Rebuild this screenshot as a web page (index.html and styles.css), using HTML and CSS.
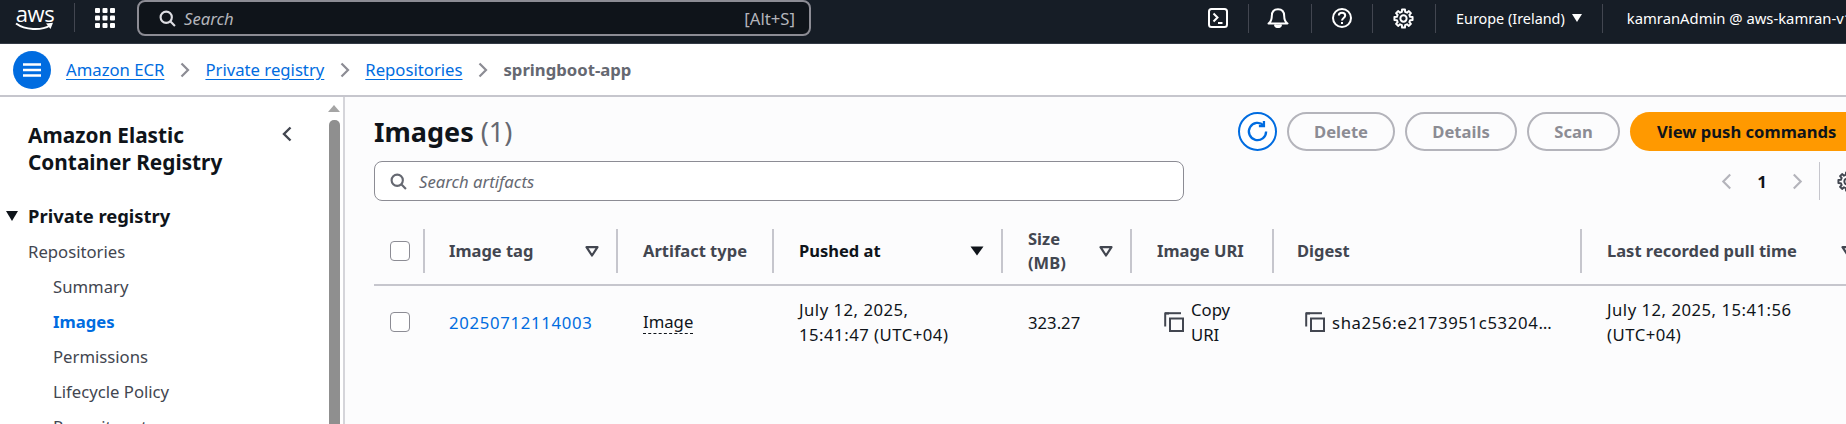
FILE: index.html
```html
<!DOCTYPE html>
<html lang="en">
<head>
<meta charset="utf-8">
<title>Images - Amazon ECR</title>
<link rel="stylesheet" href="styles.css">
</head>
<body>
<svg class="defs" width="0" height="0">
  <symbol id="gear" viewBox="0 0 16 16">
    <path fill="none" stroke="currentColor" stroke-width="1.5" stroke-linejoin="round" d="M14.91 9.1 13.05 9.26 12.46 10.68 13.66 12.11 12.11 13.66 10.68 12.46 9.26 13.05 9.1 14.91 6.9 14.91 6.74 13.05 5.32 12.46 3.89 13.66 2.34 12.11 3.54 10.68 2.95 9.26 1.09 9.1 1.09 6.9 2.95 6.74 3.54 5.32 2.34 3.89 3.89 2.34 5.32 3.54 6.74 2.95 6.9 1.09 9.1 1.09 9.26 2.95 10.68 3.54 12.11 2.34 13.66 3.89 12.46 5.32 13.05 6.74 14.91 6.9Z"/>
    <circle cx="8" cy="8" r="2.4" fill="none" stroke="currentColor" stroke-width="1.5"/>
  </symbol>
  <symbol id="mag" viewBox="0 0 16 16">
    <circle cx="6.8" cy="6.8" r="5.3" fill="none" stroke="currentColor" stroke-width="2"/>
    <path d="M10.6 10.6 15 15" fill="none" stroke="currentColor" stroke-width="2"/>
  </symbol>
  <symbol id="copy" viewBox="0 0 20 20">
    <path d="M5 1.5H1.2V14.5" fill="none" stroke="currentColor" stroke-width="2"/>
    <path d="M1 1.2H17" fill="none" stroke="currentColor" stroke-width="2"/>
    <rect x="6" y="6.5" width="13" height="12.5" fill="none" stroke="currentColor" stroke-width="2"/>
  </symbol>
  <symbol id="sort" viewBox="0 0 14 11">
    <path d="M1.5 1.2H12.5L7 9.5Z" fill="none" stroke="currentColor" stroke-width="2.2" stroke-linejoin="round"/>
  </symbol>
</svg>

<header class="topbar">
  <div class="logo">
    <span class="logo-text">aws</span>
    <svg class="logo-smile" width="40" height="10" viewBox="0 0 40 10"><path d="M1 1.5C10 8 26 9 35 3.5" fill="none" stroke="#fff" stroke-width="2"/><path d="M31 1.5 38 0.8 35.5 7" fill="#fff"/></svg>
  </div>
  <span class="tb-sep"></span>
  <svg class="apps" width="20" height="20" viewBox="0 0 20 20" fill="#fff">
    <rect x="0" y="0" width="5" height="5" rx="1"/><rect x="7.5" y="0" width="5" height="5" rx="1"/><rect x="15" y="0" width="5" height="5" rx="1"/>
    <rect x="0" y="7.5" width="5" height="5" rx="1"/><rect x="7.5" y="7.5" width="5" height="5" rx="1"/><rect x="15" y="7.5" width="5" height="5" rx="1"/>
    <rect x="0" y="15" width="5" height="5" rx="1"/><rect x="7.5" y="15" width="5" height="5" rx="1"/><rect x="15" y="15" width="5" height="5" rx="1"/>
  </svg>
  <div class="tb-search">
    <svg class="tb-search-icon" width="17" height="17"><use href="#mag"/></svg>
    <span class="tb-search-text">Search</span>
    <span class="tb-shortcut">[Alt+S]</span>
  </div>
  <div class="tb-right">
    <div class="tb-item">
      <svg width="20" height="20" viewBox="0 0 20 20" fill="none" stroke="#fff" stroke-width="2"><rect x="1" y="1" width="18" height="18" rx="2.5"/><path d="M5.5 5.5 9.5 9.5 5.5 13.5"/><path d="M10 15H14.5"/></svg>
    </div>
    <div class="tb-item tb-bell">
      <svg width="22" height="20" viewBox="0 0 22 20" fill="none" stroke="#fff" stroke-width="2"><path d="M1.5 15.5C4.5 13.5 4.8 11 4.8 8 4.8 4 7 1.2 11 1.2S17.2 4 17.2 8C17.2 11 17.5 13.5 20.5 15.5Z" stroke-linejoin="round"/><path d="M8 16.5C8 20 14 20 14 16.5" fill="#fff"/></svg>
    </div>
    <div class="tb-item">
      <svg width="20" height="20" viewBox="0 0 20 20" fill="none" stroke="#fff" stroke-width="2"><circle cx="10" cy="10" r="9"/><path d="M6.8 7.5C6.8 3.8 13.2 3.8 13.2 7.5 13.2 10 10 10 10 12.6"/><path d="M10 14V16"/></svg>
    </div>
    <div class="tb-item tb-settings">
      <svg class="tb-gear" width="21" height="21"><use href="#gear"/></svg>
    </div>
    <div class="tb-item tb-region">Europe (Ireland)<span class="tb-caret"></span></div>
    <div class="tb-user">kamranAdmin @ aws-kamran-v1</div>
  </div>
</header>

<nav class="crumbs">
  <button class="menu-btn" aria-label="Menu"><svg width="18" height="14" viewBox="0 0 18 14" fill="none" stroke="#fff" stroke-width="2.4"><path d="M0 1.5H18M0 7H18M0 12.5H18"/></svg></button>
  <a class="crumb-link">Amazon ECR</a>
  <svg class="crumb-chev" width="10" height="16" viewBox="0 0 10 16"><path d="M1.5 1.5 8 8 1.5 14.5" fill="none" stroke="#8c8c94" stroke-width="2.2"/></svg>
  <a class="crumb-link">Private registry</a>
  <svg class="crumb-chev" width="10" height="16" viewBox="0 0 10 16"><path d="M1.5 1.5 8 8 1.5 14.5" fill="none" stroke="#8c8c94" stroke-width="2.2"/></svg>
  <a class="crumb-link">Repositories</a>
  <svg class="crumb-chev" width="10" height="16" viewBox="0 0 10 16"><path d="M1.5 1.5 8 8 1.5 14.5" fill="none" stroke="#8c8c94" stroke-width="2.2"/></svg>
  <span class="crumb-current">springboot-app</span>
</nav>

<div class="layout">
  <aside class="sidebar">
    <div class="side-nav">
      <div class="side-head">
        <h2 class="side-title">Amazon Elastic Container Registry</h2>
        <svg class="side-close" width="10" height="16" viewBox="0 0 10 16"><path d="M8.5 1.5 2 8 8.5 14.5" fill="none" stroke="#424650" stroke-width="2.4"/></svg>
      </div>
      <div class="side-section"><span class="side-caret"></span>Private registry</div>
      <a class="side-link">Repositories</a>
      <a class="side-link side-sub">Summary</a>
      <a class="side-link side-sub side-active">Images</a>
      <a class="side-link side-sub">Permissions</a>
      <a class="side-link side-sub">Lifecycle Policy</a>
      <a class="side-link side-sub">Repository tags</a>
    </div>
    <div class="scrollbar">
      <span class="scroll-arrow"></span>
      <span class="scroll-thumb"></span>
    </div>
  </aside>

  <main class="content">
    <div class="title-row">
      <h1 class="page-title">Images <span class="page-count">(1)</span></h1>
      <div class="actions">
        <button class="icon-btn" aria-label="Refresh"><svg width="23" height="23" viewBox="0 0 20 20" fill="none" stroke="#006ce0" stroke-width="2"><path d="M17.5 10A7.5 7.5 0 1 1 15.3 4.7"/><path d="M15.6 0.8V5.2H11.2"/></svg></button>
        <button class="btn btn-delete">Delete</button>
        <button class="btn btn-details">Details</button>
        <button class="btn btn-scan">Scan</button>
        <button class="btn-primary">View push commands</button>
      </div>
    </div>
    <div class="filter-row">
      <div class="filter">
        <svg class="filter-icon" width="17" height="17"><use href="#mag"/></svg>
        <span class="filter-text">Search artifacts</span>
      </div>
      <div class="pager">
        <svg width="11" height="17" viewBox="0 0 10 16"><path d="M8.5 1.5 2 8 8.5 14.5" fill="none" stroke="#b4b4bb" stroke-width="2"/></svg>
        <span class="pager-num">1</span>
        <svg width="11" height="17" viewBox="0 0 10 16"><path d="M1.5 1.5 8 8 1.5 14.5" fill="none" stroke="#b4b4bb" stroke-width="2"/></svg>
        <span class="pager-sep"></span>
        <svg class="pager-gear" width="21" height="21"><use href="#gear"/></svg>
      </div>
    </div>

    <div class="table">
      <div class="th th-check"><span class="check"></span></div>
      <div class="th th-tag"><span class="th-label">Image tag</span><svg class="sort" width="14" height="11"><use href="#sort"/></svg></div>
      <div class="th"><span class="th-label">Artifact type</span></div>
      <div class="th th-sorted"><span class="th-label">Pushed at</span><svg class="sort" width="14" height="10" viewBox="0 0 14 10"><path d="M0.5 0.5H13.5L7 9.5Z" fill="#0f141a"/></svg></div>
      <div class="th"><span class="th-label th-narrow">Size (MB)</span><svg class="sort" width="14" height="11"><use href="#sort"/></svg></div>
      <div class="th"><span class="th-label">Image URI</span></div>
      <div class="th th-digest"><span class="th-label">Digest</span></div>
      <div class="th th-last"><span class="th-label">Last recorded pull time</span><svg class="sort" width="14" height="11"><use href="#sort"/></svg></div>

      <div class="td td-check"><span class="check"></span></div>
      <div class="td td-tag"><a class="tag-link">20250712114003</a></div>
      <div class="td"><span class="dotted">Image</span></div>
      <div class="td td-date">July 12, 2025,<br>15:41:47 (UTC+04)</div>
      <div class="td">323.27</div>
      <div class="td td-copy"><svg class="copy-icon" width="20" height="20"><use href="#copy"/></svg><span class="copy-uri">Copy URI</span></div>
      <div class="td td-copy td-digest"><svg class="copy-icon" width="20" height="20"><use href="#copy"/></svg><span class="digest">sha256:e2173951c53204…</span></div>
      <div class="td td-date td-last">July 12, 2025, 15:41:56<br>(UTC+04)</div>
    </div>
  </main>
</div>
</body>
</html>
```
FILE: styles.css
```css
* { box-sizing: border-box; }
html, body { margin: 0; height: 100%; overflow: hidden; }
body {
  width: 1846px;
  height: 424px;
  display: flex;
  flex-direction: column;
  font-family: "Noto Sans", "Open Sans", sans-serif;
  font-size: 16.7px;
  color: #0f141a;
  background: #fff;
}
.defs { position: absolute; }
button { font-family: inherit; }

/* Top bar */
.topbar {
  flex: 0 0 44px;
  display: flex;
  align-items: flex-start;
  background: #161d26;
  border-bottom: 1px solid #333a45;
  color: #fff;
}
.topbar > * { flex: none; }
.logo { position: relative; width: 40px; height: 36px; margin-left: 15px; }
.logo-text {
  display: block;
  text-align: center;
  font-family: "Open Sans", sans-serif;
  font-size: 22px;
  line-height: 22px;
  margin-top: 2px;
  letter-spacing: -0.5px;
}
.logo-smile { position: absolute; left: 0; top: 22px; }
.tb-sep { width: 1px; height: 29px; margin: 3px 0 0 19px; background: #424650; }
.apps { margin: 8px 0 0 20px; }
.tb-search {
  width: 674px;
  height: 36px;
  margin-left: 22px;
  display: flex;
  align-items: center;
  padding: 0 14px 0 20px;
  background: #0f141a;
  border: 2px solid #8c8c94;
  border-radius: 8px;
  color: #b4b4bb;
}
.tb-search-icon { color: #dedee3; }
.tb-search-text { margin-left: 8px; font-style: italic; }
.tb-shortcut { margin-left: auto; }
.tb-right { display: flex; align-items: center; margin-left: 377px; height: 36px; white-space: nowrap; }
.tb-item {
  display: flex;
  align-items: center;
  height: 29px;
  padding: 0 20px;
  border-right: 1px solid #424650;
  font-size: 14.4px;
}
.tb-bell { padding: 0 22px 0 18px; }
.tb-settings { padding-right: 21px; }
.tb-gear { color: #fff; }
.tb-caret {
  width: 0; height: 0;
  margin-left: 7px;
  border-left: 5px solid transparent;
  border-right: 5px solid transparent;
  border-top: 8px solid #fff;
}
.tb-user { margin-left: 24px; font-size: 14.8px; }

/* Breadcrumbs */
.crumbs {
  flex: 0 0 53px;
  display: flex;
  align-items: center;
  padding: 0 0 0 13px;
  background: #fff;
  border-bottom: 2px solid #c6c6cd;
  white-space: nowrap;
}
.menu-btn {
  width: 38px;
  height: 38px;
  padding: 0;
  margin-right: 15px;
  display: flex;
  align-items: center;
  justify-content: center;
  border: 0;
  border-radius: 50%;
  background: #006ce0;
}
.crumb-link { color: #006ce0; text-decoration: underline; text-underline-offset: 3px; }
.crumb-chev { margin: 0 15px 0 16px; flex: none; }
.crumb-current { font-weight: 700; color: #656871; }

/* Layout */
.layout { flex: 1; display: flex; min-height: 0; }
.sidebar {
  flex: 0 0 345px;
  display: flex;
  background: #fff;
  border-right: 2px solid #d5d5da;
  overflow: hidden;
}
.side-nav { flex: 0 0 328px; padding: 25px 0 0 28px; }
.side-head { display: flex; align-items: flex-start; width: 264px; justify-content: space-between; }
.side-title { width: 215px; margin: 0; font-size: 20.8px; line-height: 27px; font-weight: 700; }
.side-close { margin: 4px 0 0 0; }
.side-section {
  position: relative;
  margin-top: 27px;
  font-size: 18.4px;
  line-height: 26px;
  font-weight: 700;
}
.side-caret {
  position: absolute;
  left: -22px;
  top: 8px;
  border-left: 6px solid transparent;
  border-right: 6px solid transparent;
  border-top: 10px solid #0f141a;
}
.side-link { display: block; margin-top: 10px; line-height: 25px; color: #424650; }
.side-sub { margin-left: 25px; }
.side-active { color: #006ce0; font-weight: 700; }
.scrollbar { flex: 0 0 11px; display: flex; flex-direction: column; align-items: center; padding-top: 8px; }
.scroll-arrow {
  flex: none;
  border-left: 6px solid transparent;
  border-right: 6px solid transparent;
  border-bottom: 7px solid #a5a5a5;
}
.scroll-thumb { flex: 1; width: 11px; margin-top: 8px; border-radius: 5px 5px 0 0; background: #8f8f8f; }

.content { flex: 1; min-width: 0; padding: 15px 0 0 29px; background: #fcfcfd; overflow: hidden; }
.title-row { display: flex; align-items: center; height: 39px; }
.page-title { margin: 0; font-size: 27px; line-height: 39px; font-weight: 700; white-space: nowrap; }
.page-count { font-weight: 400; color: #656871; }
.actions { display: flex; gap: 10px; margin-left: auto; flex: none; }
.icon-btn {
  width: 39px; height: 39px;
  padding: 0;
  display: flex; align-items: center; justify-content: center;
  background: #fff;
  border: 2px solid #006ce0;
  border-radius: 50%;
}
.btn {
  height: 39px;
  padding: 0;
  background: #fcfcfd;
  border: 2px solid #b4b4bb;
  border-radius: 20px;
  color: #8c8c94;
  font-size: 16.6px;
  font-weight: 700;
}
.btn-delete { width: 108px; }
.btn-details { width: 112px; }
.btn-scan { width: 93px; }
.btn-primary {
  width: 232px;
  height: 39px;
  margin-right: -16px;
  padding: 0 0 0 27px;
  text-align: left;
  background: #ff9900;
  border: 0;
  border-radius: 20px 0 0 20px;
  color: #0f141a;
  font-size: 16.6px;
  font-weight: 700;
  white-space: nowrap;
}
.filter-row { display: flex; align-items: center; margin-top: 10px; }
.filter {
  width: 810px;
  height: 40px;
  display: flex;
  align-items: center;
  padding: 0 14px 0 15px;
  background: #fff;
  border: 1px solid #8c8c94;
  border-radius: 8px;
}
.filter-icon { color: #656871; }
.filter-text { margin-left: 12px; font-style: italic; color: #656871; }
.pager { display: flex; align-items: center; margin-left: auto; height: 38px; flex: none; margin-right: -12px; }
.pager-num { width: 60px; text-align: center; font-weight: 700; color: #0f141a; }
.pager-sep { width: 1px; height: 38px; margin-left: 16px; background: #c6c6cd; }
.pager-gear { margin-left: 17px; color: #424650; }

/* Table */
.table {
  display: grid;
  grid-template-columns: 51px 193px 156px 229px 129px 142px 308px 300px;
  grid-template-rows: 85px auto;
  width: 1508px;
}
.th {
  position: relative;
  display: flex;
  align-items: center;
  justify-content: space-between;
  padding: 17px 19px 0 25px;
  border-bottom: 2px solid #c6c6cd;
  font-weight: 700;
  font-size: 16.5px;
  line-height: 24px;
  color: #424650;
}
.th::after {
  content: "";
  position: absolute;
  right: 0;
  top: 28px;
  bottom: 11px;
  width: 2px;
  background: #c6c6cd;
}
.th-tag { padding-left: 24px; }
.th-digest { padding-left: 23px; }
.th-last { justify-content: flex-start; gap: 44px; }
.th-last::after { display: none; }
.th-sorted { color: #0f141a; }
.th-narrow { width: 50px; }
.sort { flex: none; color: #424650; }
.th-check, .td-check { padding-left: 16px; padding-right: 0; justify-content: flex-start; }
.check {
  display: block;
  width: 20px; height: 20px;
  background: #fff;
  border: 1px solid #8c8c94;
  border-radius: 4px;
}
.td {
  display: flex;
  align-items: center;
  flex-wrap: wrap;
  height: 72px;
  padding: 0 0 0 25px;
  line-height: 25px;
  color: #0f141a;
  align-content: center;
}
.td-check { padding-left: 16px; }
.td-tag { padding-left: 24px; }
.td-date { letter-spacing: 0.5px; }
.tag-link { color: #006ce0; letter-spacing: 0.7px; }
.dotted { border-bottom: 1px dashed #0f141a; line-height: 22px; }
.td-copy { flex-wrap: nowrap; padding-left: 32px; }
.td-digest { padding-left: 31px; }
.copy-icon { flex: none; color: #424650; }
.copy-uri { width: 46px; margin-left: 7px; }
.digest { margin-left: 7px; white-space: nowrap; letter-spacing: 0.65px; }
```
